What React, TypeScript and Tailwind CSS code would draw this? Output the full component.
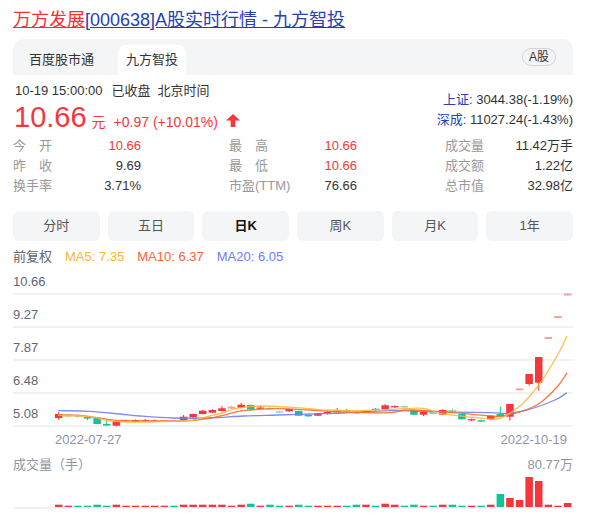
import React from "react";

const RED = "#f5363a";
const GREEN = "#14c29a";
const LRED = "#f6a0a0";
const LGREEN = "#86d9c2";

type C = [number, number, number, number, string];
const candles: C[] = [
  [414, 418, 412, 420, "r"],
  [415, 416.5, 414, 417, "lr"],
  [415.5, 417, 414.5, 418, "lg"],
  [417, 418.5, 416, 420, "g"],
  [417.7, 424, 417.7, 424, "g"],
  [424, 425.5, 420, 426, "g"],
  [421, 425.7, 420, 426.5, "r"],
  [420, 421.7, 419, 422.5, "lr"],
  [420, 421.7, 419.5, 422, "r"],
  [420, 421.2, 419, 422, "r"],
  [420.5, 421.5, 419.5, 422, "r"],
  [420.5, 421.5, 420, 422, "lr"],
  [420.5, 421.5, 420, 422, "lg"],
  [416.7, 420, 415, 420.5, "r"],
  [414, 417.3, 413.5, 418, "r"],
  [410.7, 414, 410, 414.5, "r"],
  [410, 412.7, 409, 413, "r"],
  [408.3, 411, 406, 411.5, "r"],
  [406.7, 408.7, 406, 409, "lr"],
  [404.7, 407.7, 402.7, 408, "r"],
  [405, 409.3, 404.5, 411, "g"],
  [407.5, 408.5, 405.5, 409.5, "r"],
  [408, 409.3, 407, 410, "lg"],
  [411.3, 412.7, 410.5, 413, "lg"],
  [409, 411.3, 408.5, 412, "r"],
  [411, 415.7, 410.5, 416, "g"],
  [415, 416.3, 414.5, 417, "g"],
  [413.3, 415.7, 413, 416, "r"],
  [411.8, 412.8, 410.7, 414.7, "r"],
  [410, 412.3, 408, 412.5, "r"],
  [410, 411.3, 408.7, 412.7, "g"],
  [412, 413.3, 411.5, 413.8, "g"],
  [411.3, 412.7, 410.5, 413, "r"],
  [408.7, 410, 408, 411.3, "g"],
  [405.3, 409.3, 404, 409.5, "r"],
  [406, 407.3, 405.5, 408, "r"],
  [406, 407.5, 405.5, 408, "lg"],
  [410, 414.7, 409.5, 415, "g"],
  [411.7, 414.7, 411, 416, "r"],
  [411.3, 414, 411, 414.5, "lg"],
  [410, 414.7, 409, 415, "r"],
  [410, 411.3, 408.5, 412, "lg"],
  [414, 419.3, 413.5, 419.5, "g"],
  [419.2, 420.2, 418.5, 421, "r"],
  [420.2, 421.2, 419.5, 422, "g"],
  [415.7, 419.3, 415, 420, "r"],
  [414, 416.7, 406.7, 417, "g"],
  [404, 416.7, 404, 420.7, "r"],
  [388.5, 390.3, 388.5, 390.3, "lr"],
  [374, 384, 374, 385.7, "r"],
  [357, 382.7, 357, 390.7, "r"],
  [337, 339, 337, 339, "lr"],
  [316, 318, 316, 318, "lr"],
  [293.5, 295.5, 293.5, 295.5, "lr"],
];

const vols: [number, string][] = [
  [2.3, "r"], [1.3, "r"], [1.3, "g"], [1.3, "g"], [2.3, "g"], [1.3, "g"], [2.3, "r"], [1.3, "r"],
  [1.3, "r"], [1.3, "r"], [1.3, "r"], [1.3, "r"], [1.3, "g"], [2.3, "r"], [2.3, "r"], [2.3, "r"],
  [2.3, "r"], [2.3, "r"], [1.3, "r"], [2.3, "r"], [3.3, "g"], [1.3, "r"], [2.3, "g"], [1.3, "g"],
  [1.3, "r"], [2.3, "g"], [1.3, "g"], [1.3, "r"], [1.3, "r"], [1.3, "r"], [1.3, "g"], [2.3, "g"],
  [2.3, "r"], [1.3, "g"], [3.3, "r"], [2.3, "r"], [1.3, "g"], [2.3, "g"], [1.3, "r"], [1.3, "g"],
  [2.3, "r"], [2.3, "g"], [1.3, "g"], [1.3, "r"], [1.3, "g"], [2.3, "r"], [13, "g"], [9, "r"],
  [7, "r"], [30, "r"], [26, "r"], [2.3, "r"], [1.3, "r"], [4, "r"],
];

const ma20 = [[58,410.7],[90,411.3],[120,414],[140,416],[173,418],[210,418],[243,416],[277,415],[310,414],[343,413],[390,410.7],[440,411.7],[490,412.7],[507,413.3],[523,411],[540,406],[557,399],[567,392.7]];
const ma10 = [[58,415],[80,415.3],[107,419.3],[123,420.7],[150,421],[173,421],[190,420.7],[210,418],[222,415.5],[243,410.7],[277,408.7],[310,410],[343,412],[390,412.7],[407,410],[440,411.7],[473,414.3],[497,416.5],[507,415],[523,411],[540,403],[557,387],[567,373]];
const ma5 = [[58,415.3],[90,416.7],[107,420.7],[127,422],[157,421.7],[190,420.7],[210,416],[222,413],[237,408.3],[260,406],[293,407.3],[327,410],[360,410.7],[390,409.3],[423,408.3],[440,413.3],[473,417.3],[497,419],[507,415],[523,403.3],[540,383.3],[557,356],[567,336]];

function smooth(pts: number[][]) {
  let d = `M${pts[0][0]},${pts[0][1]}`;
  for (let i = 0; i < pts.length - 1; i++) {
    const p0 = pts[i - 1] || pts[i];
    const p1 = pts[i];
    const p2 = pts[i + 1];
    const p3 = pts[i + 2] || p2;
    const c1x = p1[0] + (p2[0] - p0[0]) / 6;
    const c1y = p1[1] + (p2[1] - p0[1]) / 6;
    const c2x = p2[0] - (p3[0] - p1[0]) / 6;
    const c2y = p2[1] - (p3[1] - p1[1]) / 6;
    d += ` C${c1x},${c1y} ${c2x},${c2y} ${p2[0]},${p2[1]}`;
  }
  return d;
}

const colorOf = (c: string) => (c === "r" ? RED : c === "g" ? GREEN : c === "lr" ? LRED : LGREEN);

function Label({ text }: { text: string }) {
  if (text.length === 2) {
    return (
      <span className="flex w-[39px] justify-between text-[#999]">
        <span>{text[0]}</span>
        <span>{text[1]}</span>
      </span>
    );
  }
  return <span className="text-[#999]">{text}</span>;
}

const cols: [string, string, boolean][][] = [
  [["今开", "10.66", true], ["昨收", "9.69", false], ["换手率", "3.71%", false]],
  [["最高", "10.66", true], ["最低", "10.66", true], ["市盈(TTM)", "76.66", false]],
  [["成交量", "11.42万手", false], ["成交额", "1.22亿", false], ["总市值", "32.98亿", false]],
];

const periods = ["分时", "五日", "日K", "周K", "月K", "1年"];
const yLabels = ["10.66", "9.27", "7.87", "6.48", "5.08"];

export default function App() {
  return (
    <div className="w-[589px] h-[516px] overflow-hidden bg-white pl-[13px] pr-[16px] font-['Liberation_Sans','Noto_Sans_CJK_SC',sans-serif] text-[#333]">
      <div className="pt-[8px] text-[18px] leading-[24px] whitespace-nowrap">
        <span className="text-[#f73131] underline">万方发展</span>
        <span className="text-[#2440b3] underline">[000638]A股实时行情 - 九方智投</span>
      </div>

      <div className="mt-[7px] h-[36px] bg-[#f4f5f7] rounded-t-[10px] flex items-end pl-[8px] pr-[17px]">
        <div className="h-[30px] px-[8px] flex items-center text-[13px] text-[#333]">百度股市通</div>
        <div className="ml-[16px] h-[30px] px-[8px] flex items-center text-[13px] text-[#333] bg-white rounded-t-[8px]">九方智投</div>
        <div className="ml-auto self-center h-[18px] px-[6px] rounded-full border border-[#d4d4d8] text-[12px] leading-[16px] text-[#333]">A股</div>
      </div>

      <div className="mt-[6px] flex justify-between">
        <div>
          <div className="h-[20px] leading-[20px] text-[13px] flex gap-[9px] pl-[2px]">
            <span>10-19 15:00:00</span>
            <span>已收盘</span>
            <span className="-ml-[2px]">北京时间</span>
          </div>
          <div className="h-[35px] flex items-baseline text-[#f5363a] leading-[33px]">
            <span className="text-[29px] pl-[1px]">10.66</span>
            <span className="ml-[5px] text-[14px]">元</span>
            <span className="ml-[8px] text-[14px]">+0.97 (+10.01%)</span>
            <svg className="ml-[8px] -mb-[2px]" width="14" height="13" viewBox="0 0 14 13">
              <path d="M7 0 L14 6.5 L9.3 6.5 L9.3 13 L4.7 13 L4.7 6.5 L0 6.5 Z" fill="#f5363a" />
            </svg>
          </div>
        </div>
        <div className="pt-[9px] text-[13px] leading-[20px] text-right">
          <div>
            <span className="text-[#2440b3]">上证:</span> 3044.38(-1.19%)
          </div>
          <div>
            <span className="text-[#2440b3]">深成:</span> 11027.24(-1.43%)
          </div>
        </div>
      </div>

      <div className="flex justify-between text-[13px] leading-[20px]">
        {cols.map((col, ci) => (
          <div key={ci} className="w-[128px]">
            {col.map(([l, v, red]) => (
              <div key={l} className="flex justify-between">
                <Label text={l} />
                <span className={red ? "text-[#f5363a]" : "text-[#333]"}>{v}</span>
              </div>
            ))}
          </div>
        ))}
      </div>

      <div className="mt-[15px] grid grid-cols-6 gap-[8px]">
        {periods.map((t) => (
          <div
            key={t}
            className={
              t === "日K"
                ? "h-[30px] rounded-[6px] bg-[#f4f5f7] flex items-center justify-center text-[13px] font-bold text-[#111]"
                : "h-[30px] rounded-[6px] bg-[#f4f5f7] flex items-center justify-center text-[13px] text-[#555]"
            }
          >
            {t}
          </div>
        ))}
      </div>

      <div className="mt-[6px] h-[20px] leading-[20px] text-[13px] flex gap-[13px]">
        <span className="text-[#626675]">前复权</span>
        <span className="text-[#f8b62d]">MA5: 7.35</span>
        <span className="text-[#fa6436]">MA10: 6.37</span>
        <span className="text-[#6c7cf5]">MA20: 6.05</span>
      </div>

      <div className="relative">
        {yLabels.map((l, i) => (
          <div
            key={l}
            className={
              i === 0
                ? "h-[28px] border-b-2 border-[#f2f2f4] flex items-end pb-[3px] text-[13px] leading-[16px] text-[#626675]"
                : "h-[33px] border-b-2 border-[#f2f2f4] flex items-end pb-[3px] text-[13px] leading-[16px] text-[#626675]"
            }
          >
            {l}
          </div>
        ))}
        <svg className="absolute left-0 top-0 overflow-visible" width="560" height="160">
          <g transform="translate(-13,-267)">
            {candles.map(([bt, bb, wt, wb, c], i) => {
              const cx = 58.75 + i * 9.6;
              const col = colorOf(c);
              return (
                <g key={i}>
                  <line x1={cx} x2={cx} y1={wt} y2={wb} stroke={col} strokeWidth="1" />
                  <rect x={cx - 3.75} y={bt} width="7.5" height={Math.max(bb - bt, 1.3)} fill={col} />
                </g>
              );
            })}
            <path d={smooth(ma20)} fill="none" stroke="#6e80f0" strokeWidth="1.3" strokeOpacity="0.9" />
            <path d={smooth(ma10)} fill="none" stroke="#fb6a2f" strokeWidth="1.3" strokeOpacity="0.9" />
            <path d={smooth(ma5)} fill="none" stroke="#fcb93b" strokeWidth="1.3" strokeOpacity="0.9" />
          </g>
        </svg>
      </div>

      <div className="mt-[5px] flex justify-between text-[13px] leading-[16px] text-[#9195a3] pl-[42px] pr-[6px]">
        <span>2022-07-27</span>
        <span>2022-10-19</span>
      </div>

      <div className="mt-[9px] flex justify-between text-[13px] leading-[16px] text-[#9195a3]">
        <span>成交量（手）</span>
        <span>80.77万</span>
      </div>

      <svg width="560" height="36" className="block">
        {vols.map(([h, c], i) => (
          <rect key={i} x={42 + i * 9.6} y={34 - h} width="7.5" height={h} fill={c === "r" ? RED : GREEN} />
        ))}
        <rect x="0" y="34" width="560" height="1.5" fill="#ececee" />
      </svg>
    </div>
  );
}
